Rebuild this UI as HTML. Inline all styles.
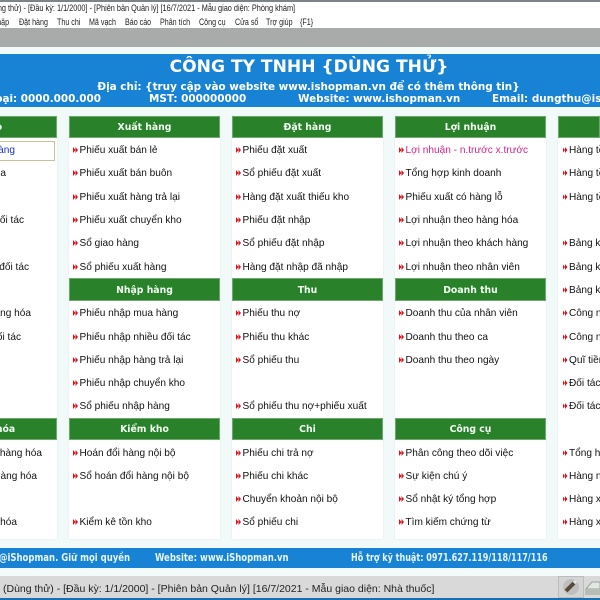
<!DOCTYPE html>
<html lang="vi"><head><meta charset="utf-8"><title>iShopman</title>
<style>
html,body{margin:0;padding:0;width:600px;height:600px;overflow:hidden;background:#f1f9f9}
body{position:relative;font-family:"Liberation Sans",sans-serif;color:#222}
#w{position:absolute;left:0;top:0;width:600px;height:600px;overflow:hidden;filter:blur(.3px)}
.a,.t,.p,.h,.i{position:absolute;white-space:nowrap}
.p{background:#fff;top:116px;height:423px;width:151px;box-shadow:0 0 1px #cfdcdc}
.h{left:0;width:151px;height:22px;background:#29812a;color:#f4fff4;text-align:center;font:bold 9.3px/24px "DejaVu Sans",sans-serif;box-shadow:0 0 0 1px #6fa86f inset}
.i{left:10.5px;margin-top:1px;font-size:10.1px;line-height:16px;color:#111}
.i::before{content:"";position:absolute;left:-6.5px;top:4px;width:5px;height:6px;background:#e0101c;clip-path:polygon(0 0,50% 50%,50% 0,100% 50%,50% 100%,50% 50%,0 100%)}
.r{position:absolute;white-space:nowrap;margin-top:1px;font-size:10.1px;line-height:16px;color:#111;text-align:right}
.w{color:#fff;font-family:"DejaVu Sans",sans-serif;font-weight:bold;text-align:center}
.l{font-size:10.4px;line-height:15px;top:92px}
.m{top:16px;font-size:8.8px;line-height:13px;color:#222;transform-origin:left;transform:scaleX(.81)}
.f{top:552px;font:bold 10.2px/14px "DejaVu Sans",sans-serif;color:#e8f4fc;transform-origin:left;transform:scaleX(.833)}
</style></head><body><div id="w">
<div class="a" style="left:0;top:0;width:600px;height:2px;background:#7c8488"></div>
<div class="a" style="left:0;top:2px;width:600px;height:26px;background:#fff"></div>
<div class="t" style="left:-14px;top:2px;font-size:9px;line-height:13px;color:#222;transform-origin:left;transform:scaleX(.815)">(Dùng thử) - [Đầu kỳ: 1/1/2000] - [Phiên bản Quản lý] [16/7/2021 - Mẫu giao diện: Phòng khám]</div>
<div class="t m" style="left:-8px">Nhập</div><div class="t m" style="left:19px">Đặt hàng</div><div class="t m" style="left:57px">Thu chi</div><div class="t m" style="left:89px">Mã vạch</div><div class="t m" style="left:125px">Báo cáo</div><div class="t m" style="left:160px">Phân tích</div><div class="t m" style="left:199px">Công cụ</div><div class="t m" style="left:235px">Cửa sổ</div><div class="t m" style="left:266px">Trợ giúp</div><div class="t m" style="left:300px">{F1}</div>
<div class="a" style="left:0;top:28px;width:600px;height:19px;background:#a9abab"></div>
<div class="a" style="left:0;top:47px;width:600px;height:7px;background:#f3fafa"></div>

<div class="a" style="left:0;top:54px;width:600px;height:53px;background:#1883d5"></div>
<div class="t w" style="left:0;width:618px;top:55.5px;font-size:17.1px;line-height:22px">CÔNG TY TNHH {DÙNG THỬ}</div>
<div class="t w" style="left:0;width:617px;top:79.5px;font-size:10.4px;line-height:15px">Địa chỉ: {truy cập vào website www.ishopman.vn để có thêm thông tin}</div>
<div class="t w l" style="right:499px">thoại: 0000.000.000</div>
<div class="t w l" style="left:149px">MST: 000000000</div>
<div class="t w l" style="left:298px">Website: www.ishopman.vn</div>
<div class="t w l" style="left:492px">Email: dungthu@ishopman.vn</div>

<div class="p" style="left:-94px">
<div class="h" style="top:0">Báo cáo</div>
<div class="h" style="top:302px">Mã hàng hóa</div>
</div>
<div class="a" style="left:-10px;top:141px;width:63px;height:18px;border:1px solid #c9c39a;background:#fff"></div>
<div class="r" style="right:585px;top:142px;color:#1a2fd0">Khách hàng</div>
<div class="r" style="right:594px;top:165px">Hàng hóa</div>
<div class="r" style="right:576px;top:212px">Các đối tác</div>
<div class="r" style="right:571px;top:259px">Các đối tác</div>
<div class="r" style="right:569px;top:305px">Nhóm hàng hóa</div>
<div class="r" style="right:579px;top:329px">Đối tác</div>
<div class="r" style="right:558px;top:445px">Nhóm hàng hóa</div>
<div class="r" style="right:563px;top:468px">Loại hàng hóa</div>
<div class="r" style="right:583px;top:514px">Hàng hóa</div>

<div class="p" style="left:69px">
<div class="h" style="top:0">Xuất hàng</div>
<div class="i" style="top:26px">Phiếu xuất bán lẻ</div>
<div class="i" style="top:49px">Phiếu xuất bán buôn</div>
<div class="i" style="top:73px">Phiếu xuất hàng trả lại</div>
<div class="i" style="top:96px">Phiếu xuất chuyển kho</div>
<div class="i" style="top:119px">Sổ giao hàng</div>
<div class="i" style="top:143px">Sổ phiếu xuất hàng</div>
<div class="h" style="top:162px;height:23px;line-height:25px">Nhập hàng</div>
<div class="i" style="top:189px">Phiếu nhập mua hàng</div>
<div class="i" style="top:213px">Phiếu nhập nhiều đối tác</div>
<div class="i" style="top:236px">Phiếu nhập hàng trả lại</div>
<div class="i" style="top:259px">Phiếu nhập chuyển kho</div>
<div class="i" style="top:282px">Sổ phiếu nhập hàng</div>
<div class="h" style="top:302px">Kiểm kho</div>
<div class="i" style="top:329px">Hoán đổi hàng nội bộ</div>
<div class="i" style="top:352px">Sổ hoán đổi hàng nội bộ</div>
<div class="i" style="top:398px">Kiểm kê tồn kho</div>
</div>

<div class="p" style="left:232px">
<div class="h" style="top:0">Đặt hàng</div>
<div class="i" style="top:26px">Phiếu đặt xuất</div>
<div class="i" style="top:49px">Sổ phiếu đặt xuất</div>
<div class="i" style="top:73px">Hàng đặt xuất thiếu kho</div>
<div class="i" style="top:96px">Phiếu đặt nhập</div>
<div class="i" style="top:119px">Sổ phiếu đặt nhập</div>
<div class="i" style="top:143px">Hàng đặt nhập đã nhập</div>
<div class="h" style="top:162px;height:23px;line-height:25px">Thu</div>
<div class="i" style="top:189px">Phiếu thu nợ</div>
<div class="i" style="top:213px">Phiếu thu khác</div>
<div class="i" style="top:236px">Sổ phiếu thu</div>
<div class="i" style="top:282px">Sổ phiếu thu nợ+phiếu xuất</div>
<div class="h" style="top:302px">Chi</div>
<div class="i" style="top:329px">Phiếu chi trả nợ</div>
<div class="i" style="top:352px">Phiếu chi khác</div>
<div class="i" style="top:375px">Chuyển khoản nội bộ</div>
<div class="i" style="top:398px">Sổ phiếu chi</div>
</div>

<div class="p" style="left:395px">
<div class="h" style="top:0">Lợi nhuận</div>
<div class="i" style="top:26px;color:#d6228a">Lợi nhuận - n.trước x.trước</div>
<div class="i" style="top:49px">Tổng hợp kinh doanh</div>
<div class="i" style="top:73px">Phiếu xuất có hàng lỗ</div>
<div class="i" style="top:96px">Lợi nhuận theo hàng hóa</div>
<div class="i" style="top:119px">Lợi nhuận theo khách hàng</div>
<div class="i" style="top:143px">Lợi nhuận theo nhân viên</div>
<div class="h" style="top:162px;height:23px;line-height:25px">Doanh thu</div>
<div class="i" style="top:189px">Doanh thu của nhân viên</div>
<div class="i" style="top:213px">Doanh thu theo ca</div>
<div class="i" style="top:236px">Doanh thu theo ngày</div>
<div class="h" style="top:302px">Công cụ</div>
<div class="i" style="top:329px">Phân công theo dõi việc</div>
<div class="i" style="top:352px">Sự kiện chú ý</div>
<div class="i" style="top:375px">Sổ nhật ký tổng hợp</div>
<div class="i" style="top:398px">Tìm kiếm chứng từ</div>
</div>

<div class="p" style="left:558px;width:42px">
<div class="h" style="top:0;width:42px"></div>
<div class="i" style="top:26px;left:11px">Hàng tồn</div>
<div class="i" style="top:49px;left:11px">Hàng tồn</div>
<div class="i" style="top:73px;left:11px">Hàng tồn</div>
<div class="i" style="top:119px;left:11px">Bảng kê</div>
<div class="i" style="top:143px;left:11px">Bảng kê</div>
<div class="i" style="top:166px;left:11px">Bảng kê</div>
<div class="i" style="top:189px;left:11px">Công nợ</div>
<div class="i" style="top:213px;left:11px">Công nợ</div>
<div class="i" style="top:236px;left:11px">Quĩ tiền</div>
<div class="i" style="top:259px;left:11px">Đối tác</div>
<div class="i" style="top:282px;left:11px">Đối tác</div>
<div class="i" style="top:329px;left:11px">Tổng hợp</div>
<div class="i" style="top:352px;left:11px">Hàng nhập</div>
<div class="i" style="top:375px;left:11px">Hàng xuất</div>
<div class="i" style="top:398px;left:11px">Hàng xuất</div>
</div>

<div class="a" style="left:0;top:548px;width:600px;height:20px;background:#1883d5"></div>
<div class="t f" style="left:-1px">@iShopman. Giữ mọi quyền</div>
<div class="t f" style="left:155px">Website: www.iShopman.vn</div>
<div class="t f" style="left:351px;transform:scaleX(.79)">Hỗ trợ kỹ thuật: 0971.627.119/118/117/116</div>

<div class="a" style="left:0;top:568px;width:600px;height:8px;background:#f3fafa"></div>
<div class="a" style="left:0;top:576px;width:600px;height:22px;background:#d9d9d9"></div>
<div class="t" style="left:3px;top:582px;font-size:10.5px;line-height:14px;color:#222">(Dùng thử) - [Đầu kỳ: 1/1/2000] - [Phiên bản Quản lý] [16/7/2021 - Mẫu giao diện: Nhà thuốc]</div>
<div class="a" style="left:558px;top:576px;width:24px;height:20px;border:1px solid #bcbcbc;background:#d4d4d4"></div>
<svg class="a" style="left:560px;top:577px" width="22" height="20" viewBox="0 0 22 20"><circle cx="11" cy="10" r="8" fill="#bfbfbf"/><path d="M6 14L14 6" stroke="#5a4a38" stroke-width="4"/><path d="M14 6L16 4" stroke="#dfe6ea" stroke-width="3"/></svg>
<svg class="a" style="left:584px;top:577px" width="16" height="20" viewBox="0 0 16 20"><path d="M2 12L8 5L16 5V12Z" fill="#e4e8e4" stroke="#9aa39a"/><path d="M1 12H16V18H1Z" fill="#b6bcb6"/></svg>
<div class="a" style="left:0;top:598px;width:600px;height:2px;background:#1a6fae"></div>
</div></body></html>
